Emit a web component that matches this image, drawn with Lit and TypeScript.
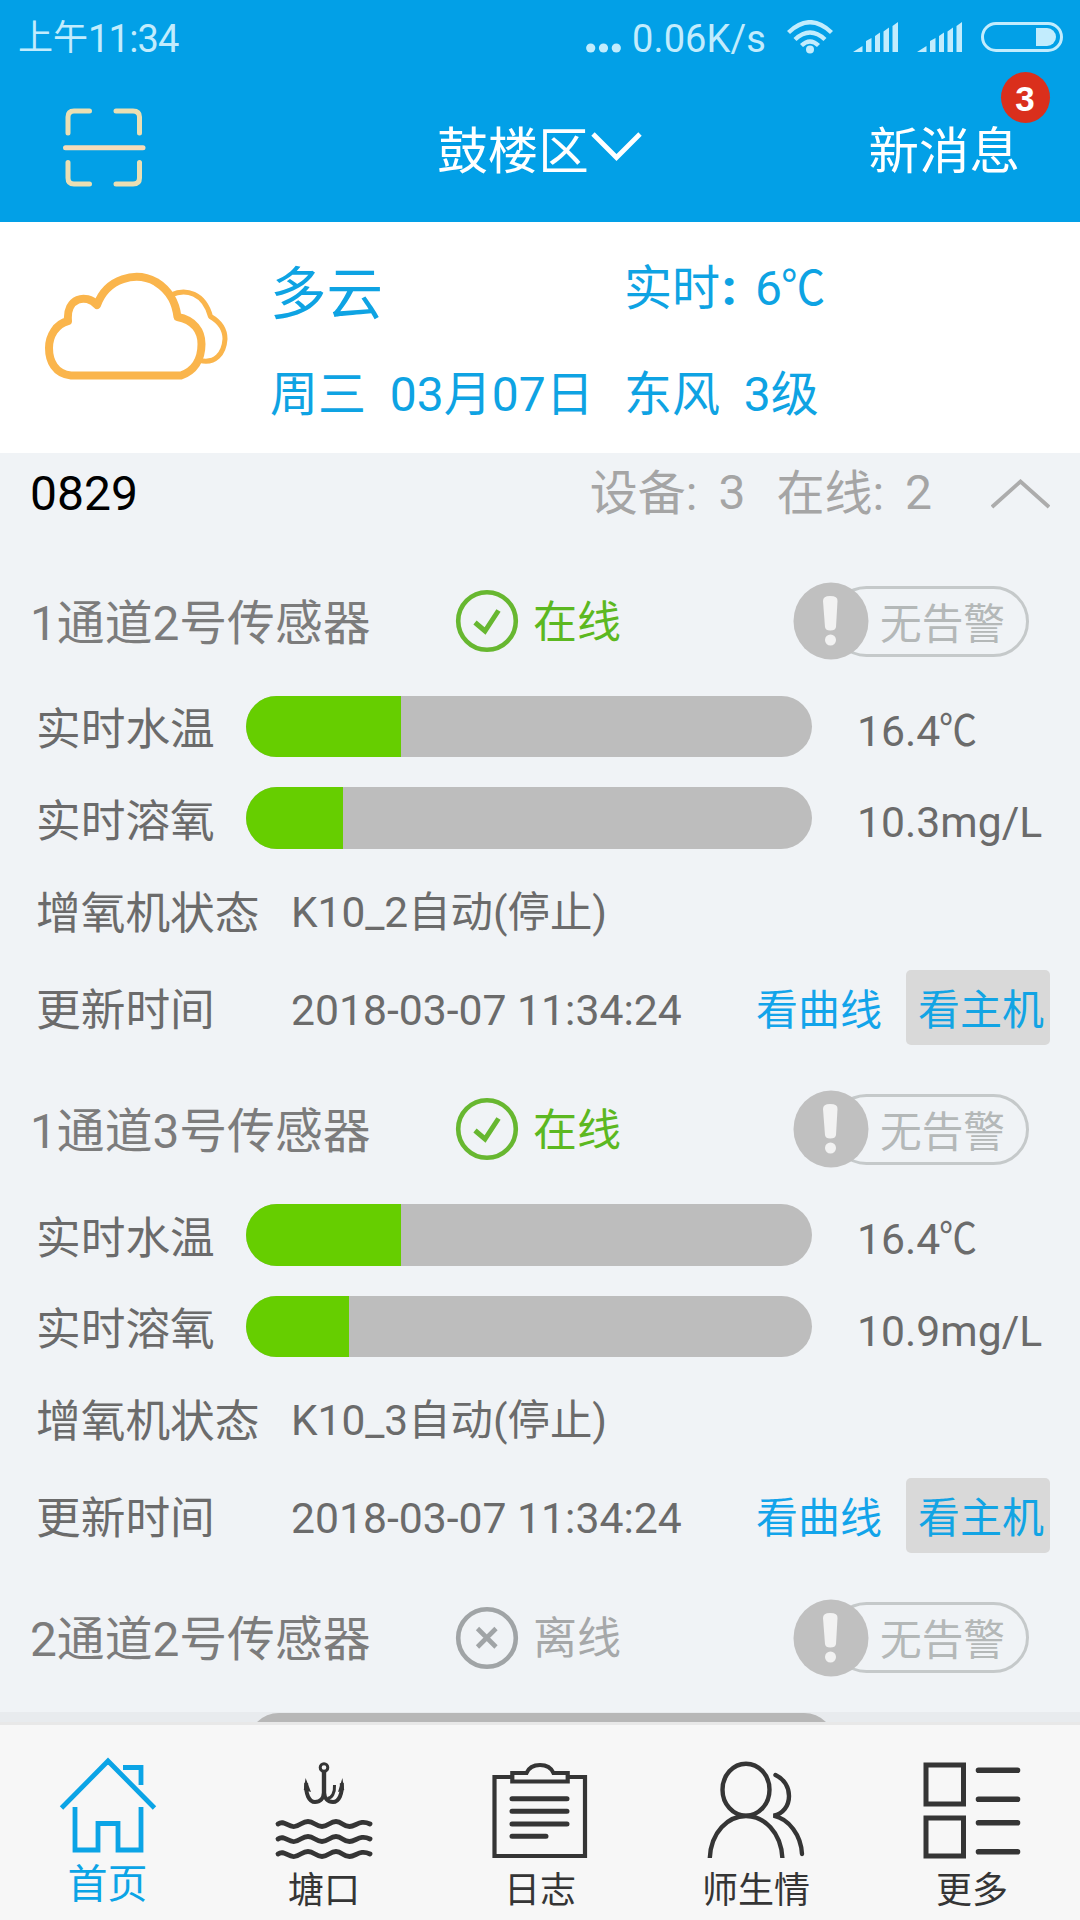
import { LitElement, html, svg, css } from "lit";
import { customElement, property } from "lit/decorators.js";

interface Sensor {
  name: string;
  online: boolean;
  temp?: number;
  oxygen?: number;
  aerator?: string;
  updated?: string;
}

const SENSORS: Sensor[] = [
  { name: "1通道2号传感器", online: true, temp: 16.4, oxygen: 10.3, aerator: "K10_2自动(停止)", updated: "2018-03-07 11:34:24" },
  { name: "1通道3号传感器", online: true, temp: 16.4, oxygen: 10.9, aerator: "K10_3自动(停止)", updated: "2018-03-07 11:34:24" },
  { name: "2通道2号传感器", online: false },
];

const GAUGE_MAX = 60;

const signal = svg`
  <path d="M0 30 L9.5 24 V30 Z M13 30 V19 L18.5 16 V30 Z M22 30 V14 L27 10.5 V30 Z M30.5 30 V9.5 L36 5.5 V30 Z M39.5 30 V4 L45 0 V30 Z" fill="currentColor"/>`;

@customElement("status-bar")
export class StatusBar extends LitElement {
  static styles = css`
    :host {
      display: flex;
      align-items: center;
      height: 77px;
      padding: 0 17px 0 18px;
      box-sizing: border-box;
      color: #c2ecfd;
      font: 400 38px/44px Roboto, "Noto Sans CJK SC", sans-serif;
    }
    .time { display: flex; align-items: center; margin-right: auto; letter-spacing: -0.8px; }
    .half { font-size: 35px; letter-spacing: 0; }
    .rate { margin-left: 11px; letter-spacing: 0.1px; margin-right: 21px; }
    .dots { margin-top: 18px; }
    .wifi, .sig, .bat { margin-top: -3px; }
    .wifi { margin-right: 20px; }
    .sig { margin-right: 19px; }
    svg { display: block; flex: none; }
  `;
  render() {
    return html`
      <div class="time"><span class="half">上午</span><span>11:34</span></div>
      <svg class="dots" width="35" height="10" fill="currentColor">
        <circle cx="4.7" cy="5" r="4.6"/><circle cx="17.5" cy="5" r="4.6"/><circle cx="30.3" cy="5" r="4.6"/>
      </svg>
      <span class="rate">0.06K/s</span>
      <svg class="wifi" width="46" height="34" viewBox="0 0 46 34" fill="none" stroke="currentColor" stroke-width="4.4">
        <path d="M1.5 12.5 Q23 -8 44.5 12.5 M8 19.5 Q23 5.5 38 19.5 M14.5 25.5 Q23 17.5 31.5 25.5"/>
        <circle cx="23" cy="29.5" r="4" fill="currentColor" stroke="none"/>
      </svg>
      <svg class="sig" width="45" height="30">${signal}</svg>
      <svg class="sig" width="45" height="30">${signal}</svg>
      <svg class="bat" width="82" height="30" fill="none">
        <rect x="1.5" y="1.5" width="79" height="27" rx="13.5" stroke="currentColor" stroke-width="3"/>
        <path d="M55 6 H66 A9 9 0 0 1 66 24 H55 Z" fill="currentColor"/>
      </svg>`;
  }
}

@customElement("title-bar")
export class TitleBar extends LitElement {
  static styles = css`
    :host {
      display: grid;
      grid-template-columns: 1fr auto 1fr;
      align-items: center;
      height: 145px;
      padding: 0 60px 3px 62px;
      box-sizing: border-box;
      color: #fff;
      font: 400 50.5px/60px "Noto Sans CJK SC", sans-serif;
    }
    svg { display: block; }
    .place { display: flex; align-items: center; gap: 2px; margin: -2px 3px 0 0; }
    .news { position: relative; justify-self: end; margin-top: -3px; }
    .badge {
      position: absolute;
      right: -29.5px;
      top: -45px;
      width: 49px;
      height: 51px;
      border-radius: 50%;
      background: #da2f1c;
      font: 700 35px/53px "Liberation Sans", sans-serif;
      text-align: center;
    }
  `;
  render() {
    return html`
      <svg width="84" height="80" viewBox="0 0 84 80" fill="none" stroke="#eadfb3" stroke-width="5" stroke-linecap="round">
        <path d="M6 25 V9 Q6 3 12 3 H27.5 M54 3 H71 Q77.5 3 77.5 9 V25 M6 54.5 V70 Q6 76 12 76 H27.5 M54 76 H71 Q77.5 76 77.5 70 V54.5"/>
        <path d="M3.5 39.7 H81" stroke="#f6dcb9"/>
      </svg>
      <div class="place">
        <span>鼓楼区</span>
        <svg width="51" height="30" fill="none" stroke="#fff" stroke-width="4.8"><path d="M2 2 L25.5 25.5 L49 2"/></svg>
      </div>
      <div class="news">新消息<span class="badge">3</span></div>`;
  }
}

@customElement("weather-panel")
export class WeatherPanel extends LitElement {
  static styles = css`
    :host {
      display: grid;
      grid-template-columns: 270px 354px 1fr;
      height: 231px;
      background: #fff;
      color: #0ea3e3;
      font: 400 48px/60px Roboto, "Noto Sans CJK SC", sans-serif;
      white-space: pre;
    }
    .cloud { margin: 48px 0 0 44px; display: block; }
    .col { display: flex; flex-direction: column; }
    .sky { font-size: 56.5px; line-height: 60px; margin-top: 43px; }
    .now { margin-top: 37px; display: flex; }
    .colon { font-weight: 900; width: 35px; box-sizing: border-box; padding-left: 2px; }
    .deg { display: inline-block; transform: scaleX(0.92); transform-origin: 0 50%; margin-left: -1px; }
    .date { margin-top: 40px; }
    .wind { margin-top: 46px; }
  `;
  render() {
    return html`
      <svg class="cloud" width="186" height="114" viewBox="0 0 186 114" fill="none" stroke="#fab54c" stroke-linejoin="round">
        <path stroke-width="5" d="M127 25 C142 18 160 23 166.5 46.5 C176 52 181 60 181 69 C180 84 171 94 156 90.5"/>
        <path stroke-width="8" d="M27 105.5 C11 104 5 91 5 78 C5 66 12 54 24 51 C22 28 42 23 53 35 C63 8 92 1 112 12 C128 22 132 35 133.5 47 C150 50 157.5 61 157.5 74 C157.5 90 150 101 137 105.5 Z"/>
      </svg>
      <div class="col"><span class="sky">多云</span><span class="date">周三  03月07日</span></div>
      <div class="col">
        <span class="now">实时<span class="colon">:</span>6<span class="deg">℃</span></span>
        <span class="wind">东风  3级</span>
      </div>`;
  }
}

@customElement("pond-header")
export class PondHeader extends LitElement {
  static styles = css`
    :host {
      display: flex;
      align-items: center;
      height: 81px;
      padding: 0 30px 0 30px;
      color: #a5a5a5;
      font: 400 48px/60px Roboto, "Noto Sans CJK SC", sans-serif;
    }
    .id { color: #000; margin-right: auto; }
    .stat { display: flex; gap: 21px; }
    .han { padding-top: 1px; }
    .dev { margin-right: 31px; }
    .arrow { display: block; margin-left: 59px; }
  `;
  render() {
    return html`
      <span class="id">0829</span>
      <span class="stat dev"><span class="han">设备:</span><span>3</span></span>
      <span class="stat"><span class="han">在线:</span><span>2</span></span>
      <svg class="arrow" width="59" height="30" fill="none" stroke="#acacac" stroke-width="3.8"><path d="M1 28 L29.5 2.5 L58 28"/></svg>`;
  }
}

@customElement("sensor-card")
export class SensorCard extends LitElement {
  @property({ attribute: false }) sensor!: Sensor;
  static styles = css`
    :host {
      display: block;
      height: 508.4px;
      color: #6b6b6b;
      font: 400 42.7px/60px Roboto, "Noto Sans CJK SC", sans-serif;
    }
    svg { display: block; flex: none; }
    .head { display: flex; align-items: center; height: 78px; padding-left: 30px; }
    .name { width: 425px; padding-top: 5px; font-size: 47.8px; color: #7c7c7c; }
    .state { width: 260px; margin-left: 14px; padding-top: 3px; font-size: 44px; color: #5cb821; }
    .state.off { color: #a6a8a9; }
    .alarm { display: flex; align-items: center; }
    .mark { position: relative; z-index: 1; }
    .pill {
      box-sizing: border-box;
      height: 71px;
      width: 198px;
      margin-left: -38px;
      padding: 3px 0 0 46px;
      border: 3px solid #c5c9ca;
      border-radius: 36px;
      font-size: 41.7px;
      line-height: 65px;
      color: #b4b8b8;
    }
    .gauge { display: flex; align-items: center; height: 61.7px; padding-left: 36px; }
    .gauges { display: flex; flex-direction: column; gap: 29.8px; margin-top: 35.8px; }
    .label { font-size: 44.7px; width: 210px; flex: none; padding-top: 7px; }
    .track { width: 566px; height: 61.7px; border-radius: 31px; overflow: hidden; background: #bdbdbd; flex: none; }
    .off-track { width: 587px; margin: 36.5px 0 0 248px; }
    .fill { height: 100%; background: #66ce00; }
    .value { margin-left: 45px; padding-top: 8px; white-space: nowrap; }
    .deg { display: inline-block; transform: scaleX(0.89); transform-origin: 0 50%; margin-left: -1px; }
    .line { display: flex; align-items: center; padding-left: 36px; }
    .aer { margin-top: 27.7px; }
    .upd { margin-top: 26px; height: 75px; }
    .wide { width: 255px; }
    .text { width: 465px; flex: none; padding-top: 5px; }
    .aer .text { font-size: 42.4px; }
    .link { font-size: 42px; color: #12a4ea; width: 150px; padding-top: 7px; }
    .btn {
      box-sizing: border-box;
      width: 144px;
      height: 75px;
      padding: 3px 0 0 12px;
      border-radius: 5px;
      background: #d9d9d9;
      font-size: 42px;
      line-height: 75px;
      color: #12a4e4;
      white-space: nowrap;
    }
  `;
  private gauge(label: string, value: number, unit: unknown) {
    return html`<div class="gauge">
      <span class="label">${label}</span>
      <div class="track"><div class="fill" style="width:${(value / GAUGE_MAX) * 100}%"></div></div>
      <span class="value">${value.toFixed(1)}${unit}</span>
    </div>`;
  }
  render() {
    const s = this.sensor;
    return html`
      <div class="head">
        <span class="name">${s.name}</span>
        ${s.online
          ? html`<svg width="64" height="64" viewBox="0 0 64 64" fill="none" stroke="#67b730" stroke-width="4.6">
              <circle cx="32" cy="32" r="28.8"/><path d="M20 33.5 L30 42 L43.5 21.5" stroke-width="5"/></svg>`
          : html`<svg width="64" height="64" viewBox="0 0 64 64" fill="none" stroke="#a0a4a6" stroke-width="4.6">
              <circle cx="32" cy="32" r="28.8"/><path d="M22.5 22.5 L41 41 M41 22.5 L22.5 41"/></svg>`}
        <span class="state ${s.online ? "" : "off"}">${s.online ? "在线" : "离线"}</span>
        <div class="alarm">
          <svg class="mark" width="76" height="78" viewBox="0 0 76 78">
            <ellipse cx="38" cy="39" rx="37.5" ry="38.5" fill="#c0c0c0"/>
            <path d="M30 19 Q30 14 37 14 Q45 14 44.5 19 L43 45 Q42.5 48.5 37.3 48.5 Q32.5 48.5 32 45 Z" fill="#f2f2f2"/>
            <circle cx="37.5" cy="58" r="5.5" fill="#f2f2f2"/>
          </svg>
          <div class="pill">无告警</div>
        </div>
      </div>
      ${s.online
        ? html`<div class="gauges">
              ${this.gauge("实时水温", s.temp!, html`<span class="deg">℃</span>`)}
              ${this.gauge("实时溶氧", s.oxygen!, "mg/L")}
            </div>
            <div class="line aer"><span class="label wide">增氧机状态</span><span class="text">${s.aerator}</span></div>
            <div class="line upd">
              <span class="label wide">更新时间</span><span class="text">${s.updated}</span>
              <span class="link">看曲线</span><span class="btn">看主机</span>
            </div>`
        : html`<div class="track off-track"></div>`}`;
  }
}

const wave = (y: number) =>
  `M4 ${y} C10 ${y - 4.5} 14 ${y + 3.5} 20.5 ${y + 2.5} S28 ${y - 2.5} 34 ${y - 2.5} S42 ${y + 2.5} 48 ${y + 2.5} S56 ${y - 2.5} 62 ${y - 2.5} S69 ${y + 2.5} 75.5 ${y + 2.5} S86 ${y - 5} 96 ${y}`;

const TABS = [
  { label: "首页", active: true, icon: svg`
      <path stroke-width="4.8" d="M3.5 52 L50 5 L96.5 52 M65 11.5 H83 V29 M17 51 V94 H40 V67.5 H60 V94 H83 V51"/>` },
  { label: "塘口", active: false, icon: svg`
      <circle cx="50" cy="11.5" r="3.8" stroke-width="3"/>
      <path stroke-width="4.4" d="M50 15 V40"/>
      <path stroke-width="4" d="M32.2 27 C31.5 38 35 46 41 46 C46 46 49.500 42.500 50 37 C50.500 42.500 54 46 59 46 C65 46 68.500 38 67.800 27"/>
      <path stroke-width="3" d="M60.5 29 C61 37 58 42 53.5 42.5"/>
      <path fill="currentColor" stroke="none" d="M31.6 22 L29.8 34 L37 36 Z M68.400 22 L70.200 34 L64 36 Z"/>
      <path stroke-width="4.8" stroke-linecap="round" d="${[68, 83, 98].map(wave).join(" ")}"/>` },
  { label: "日志", active: false, icon: svg`
      <path stroke-width="4.2" d="M22 21 H4.5 V100 H95 V21 H78"/>
      <path stroke-width="4.2" d="M22.3 25.5 V17 H36.5 Q40 9 50 9 Q60 9 63.5 17 H77.7 V25.5 Z"/>
      <path stroke-width="5" stroke-linecap="round" d="M22 42.7 H77 M22 55.2 H77 M22 68 H77 M22 80.3 H56"/>` },
  { label: "师生情", active: false, icon: svg`
      <g stroke-width="4.4">
        <ellipse cx="40" cy="33.7" rx="23.5" ry="26"/>
        <path d="M3.8 102 C5 76 22 60 40 60 C58 60 75 76 76.4 102"/>
        <path stroke-linecap="round" d="M69.5 19 C78 23 83 31 83 40 C83 50 77 58 67.5 59.7 C83 63 95 79 96 98"/>
      </g>` },
  { label: "更多", active: false, icon: svg`
      <path stroke-width="5" d="M4 9 H41.5 V48 H4 Z M4 62 H41.5 V100 H4 Z"/>
      <path stroke-width="5.6" stroke-linecap="round" d="M56.5 14.3 H95.5 M56.5 43.2 H95.5 M56.5 66.7 H95.5 M56.5 95.7 H95.5"/>` },
];

@customElement("tab-bar")
export class TabBar extends LitElement {
  static styles = css`
    :host {
      display: grid;
      grid-template-columns: repeat(5, 1fr);
      height: 195px;
      background: #f7f7f7;
      box-shadow: 0 -3px 0 #e8e8e8, 0 -13px 0 rgba(0, 0, 0, 0.03);
      position: relative;
      color: #353535;
      font: 400 36px/50px "Noto Sans CJK SC", sans-serif;
    }
    .tab { display: flex; flex-direction: column; align-items: center; padding-top: 31px; }
    .label { margin-top: 1.5px; }
    .on { color: #0ba4e6; }
    .on .label { font-size: 40px; margin-top: -4px; margin-right: 1px; }
    svg { display: block; }
  `;
  render() {
    return TABS.map((t) => html`<div class="tab ${t.active ? "on" : ""}">
      <svg width="100" height="104" viewBox="0 0 100 104" fill="none" stroke="currentColor">${t.icon}</svg>
      <span class="label">${t.label}</span>
    </div>`);
  }
}

@customElement("app-root")
export class AppRoot extends LitElement {
  static styles = css`
    :host {
      display: flex;
      flex-direction: column;
      width: 1080px;
      height: 1920px;
      overflow: hidden;
      background: #f0f3f6;
    }
    .top { background: #02a0e7; flex: none; }
    weather-panel, pond-header, tab-bar { flex: none; }
    .list { flex: 1; min-height: 0; overflow: hidden; padding-top: 48px; }
  `;
  render() {
    return html`
      <div class="top"><status-bar></status-bar><title-bar></title-bar></div>
      <weather-panel></weather-panel>
      <pond-header></pond-header>
      <div class="list">${SENSORS.map((s) => html`<sensor-card .sensor=${s}></sensor-card>`)}</div>
      <tab-bar></tab-bar>`;
  }
}
